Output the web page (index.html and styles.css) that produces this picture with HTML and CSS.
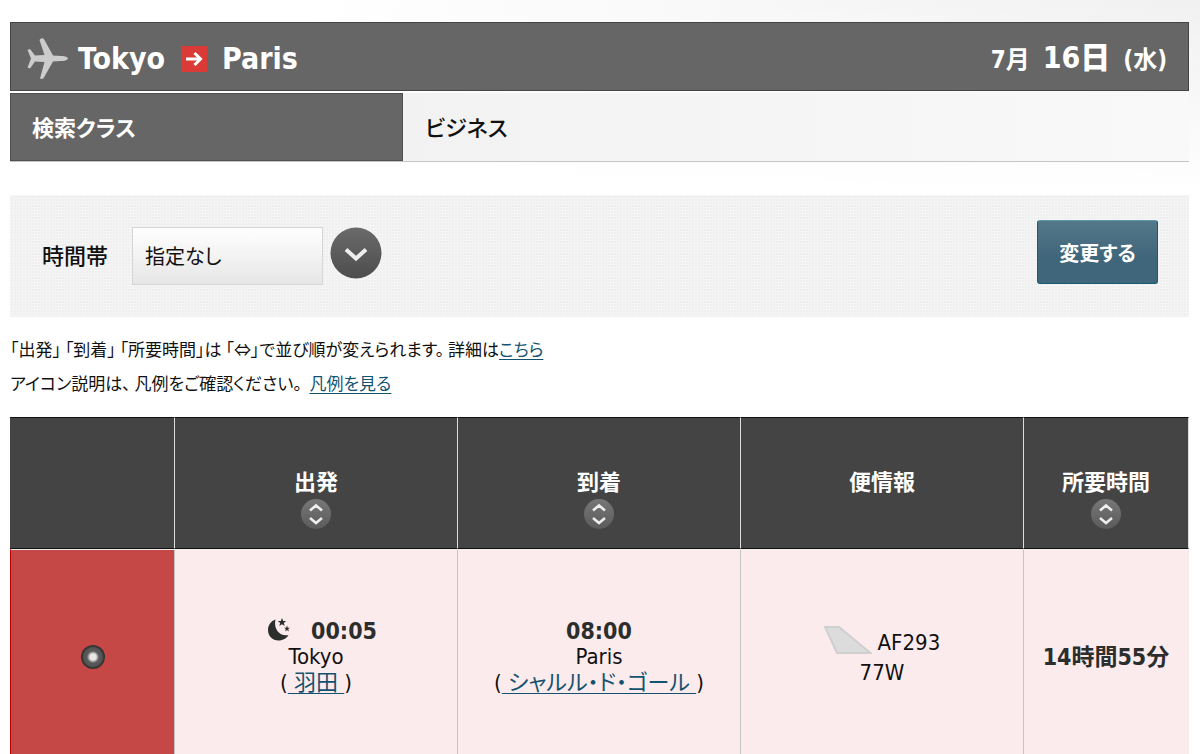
FILE: index.html
```html
<!DOCTYPE html>
<html lang="ja">
<head>
<meta charset="utf-8">
<title>Tokyo - Paris</title>
<link rel="stylesheet" href="styles.css">
</head>
<body>
<main class="page">
  <header class="route">
    <h1 class="route-title">
      <svg class="plane" viewBox="0 0 42 44" aria-hidden="true"><path d="M14 1.500C16 1 17 2 18 4L26 18.500C32 19 40 18.500 41 21.500C40 24.500 32 24 26 24.500L17.500 39.500C16.500 42 15 42.500 13 41.500L17.500 25L8 24.500L3 31.500L0.500 30.500L4 21.500L0.500 13L3 12L8 18.500L17.500 18L12.500 3Z"/></svg>
      <span>Tokyo</span>
      <svg class="arrow" viewBox="0 0 26 26" aria-hidden="true"><rect width="26" height="26"/><path d="M5 13H19M13.500 7L19.500 13L13.500 19"/></svg>
      <span>Paris</span>
    </h1>
    <p class="date"><span>7月</span> <strong>16日</strong> <span>(水)</span></p>
  </header>
  <dl class="class-row">
    <dt>検索クラス</dt>
    <dd>ビジネス</dd>
  </dl>
  <form class="filter">
    <label for="time-range">時間帯</label>
    <select id="time-range"><option>指定なし</option></select>
    <svg class="drop" viewBox="0 0 52 52" aria-hidden="true">
      <defs><linearGradient id="dg" x2="0" y2="1"><stop stop-color="#6a6a6a"/><stop offset="1" stop-color="#4d4d4d"/></linearGradient></defs>
      <circle cx="26" cy="26" r="25.500" fill="url(#dg)"/><path d="M16 22.500L26 31.500L36 22.500"/>
    </svg>
    <button type="button" class="change">変更する</button>
  </form>
  <div class="notes">
    <p>「出発」 「到着」 「所要時間」は 「⇔」で並び順が変えられます。 詳細は<a href="#">こちら</a></p>
    <p>アイコン説明は、 凡例をご確認ください。 &nbsp;<a href="#">凡例を見る</a></p>
  </div>
  <table class="flights">
    <colgroup><col class="narrow"><col class="wide"><col class="wide"><col class="wide"><col class="narrow"></colgroup>
    <thead>
      <tr>
        <th></th>
        <th>出発<button type="button" class="sort" aria-label="出発"><svg viewBox="0 0 30 30"><path d="M9 11.500L15 6.500L21 11.500M9 19L15 24L21 19"/></svg></button></th>
        <th>到着<button type="button" class="sort" aria-label="到着"><svg viewBox="0 0 30 30"><path d="M9 11.500L15 6.500L21 11.500M9 19L15 24L21 19"/></svg></button></th>
        <th>便情報</th>
        <th>所要時間<button type="button" class="sort" aria-label="所要時間"><svg viewBox="0 0 30 30"><path d="M9 11.500L15 6.500L21 11.500M9 19L15 24L21 19"/></svg></button></th>
      </tr>
    </thead>
    <tbody>
      <tr>
        <td class="pick"><input type="radio" name="flight" checked aria-label="AF293"></td>
        <td>
          <div class="time night"><svg class="moon" viewBox="0 0 24 24" aria-hidden="true"><path d="M8.500 2.500C4 4 1 8 1 13C1 19 5.500 23.500 11.500 23.500C16 23.500 20 21 21.500 18C14 20 6 13 8.500 2.500Z"/><path d="M15 1L16.200 4H19.200L16.800 5.900L17.700 9L15 7.200L12.300 9L13.200 5.900L10.800 4H13.800ZM20 8.500L20.800 10.700H23L21.200 12.100L21.900 14.400L20 13L18.100 14.400L18.800 12.100L17 10.700H19.200Z"/></svg>00:05</div>
          <div>Tokyo</div>
          <div>(<a href="#">&nbsp;羽田&nbsp;</a>)</div>
        </td>
        <td>
          <div class="time">08:00</div>
          <div>Paris</div>
          <div>(<a href="#">&nbsp;シャルル・ド・ゴール&nbsp;</a>)</div>
        </td>
        <td class="info">
          <div><svg class="tail" viewBox="0 0 48 28" aria-hidden="true"><path d="M1 1H15L46.500 27H13Z"/></svg>AF293</div>
          <div>77W</div>
        </td>
        <td class="duration">14時間55分</td>
      </tr>
    </tbody>
  </table>
</main>
</body>
</html>
```
FILE: styles.css
```css
* { box-sizing: border-box; }
body {
  margin: 0;
  height: 100vh;
  overflow: hidden;
  background: linear-gradient(#fff0, #fff) top / 100% 190px no-repeat, linear-gradient(100deg, #fff 25%, #f0f0f0 100%) top / 100% 190px no-repeat, #fff;
  color: #111;
  font-family: "DejaVu Sans Condensed", "Noto Sans CJK JP", sans-serif;
  font-feature-settings: "palt";
}
h1, p, dl, dd { margin: 0; }
a { color: #14536f; text-decoration: underline; text-underline-offset: 3px; text-decoration-thickness: 1px; }
.page { padding: 22px 11px 0 10px; }
.route {
  display: flex;
  align-items: center;
  justify-content: space-between;
  height: 69px;
  padding: 4px 21px 0 16px;
  border: 1px solid #444;
  background: #666;
  color: #fff;
}
.route-title { display: flex; align-items: center; font-size: 30px; line-height: 36px; }
.plane { width: 42px; height: 44px; margin-right: 9px; fill: #ccc; }
.arrow { width: 26px; height: 26px; margin: 0 15px 0 16px; }
.arrow rect { fill: #da3b36; }
.arrow path { fill: none; stroke: #fff; stroke-width: 3; }
.date { display: flex; align-items: baseline; gap: 13px; font-size: 24px; line-height: 36px; font-weight: 700; }
.date strong { font-size: 30px; }
.class-row {
  display: grid;
  grid-template-columns: 1fr 2fr;
  height: 71px;
  margin-bottom: 33px;
  padding-top: 2px;
  border-bottom: 1px solid #c4c4c4;
  font-size: 22px;
  font-weight: 500;
}
.class-row dt, .class-row dd { display: flex; align-items: center; padding: 0 22px 2px; }
.class-row dt { padding-left: 21px; background: #666; border: 1px solid #505050; color: #fff; font-weight: 700; }
.class-row dd { background: linear-gradient(90deg, #f2f2f2, #f9f9f9); }
.filter {
  display: flex;
  height: 122px;
  padding: 25px 31px 23px 32px;
  background-color: #efefef;
  background-image: linear-gradient(90deg, #f5f5f5 1px, transparent 1px), linear-gradient(#f5f5f5 1px, transparent 1px);
  background-size: 3px 3px;
}
.filter label { margin-right: 24px; font-size: 22px; font-weight: 500; line-height: 74px; }
.filter select {
  appearance: none;
  width: 191px;
  height: 58px;
  margin: 7px 7px 0 0;
  padding: 2px 12px 0;
  border: 1px solid #d5d5d5;
  border-radius: 0;
  background: linear-gradient(#fff, #e6e6e6);
  color: #111;
  font: inherit;
  font-size: 20px;
}
.drop { width: 52px; height: 52px; margin-top: 7px; }
.drop path { fill: none; stroke: #eee; stroke-width: 4; }
.change {
  width: 121px;
  height: 64px;
  margin-left: auto;
  padding: 0;
  border: 1px solid #175a7a;
  border-top-color: #6097ad;
  border-radius: 3px;
  background: linear-gradient(#537889, #40667b 60%);
  color: #fff;
  font: inherit;
  font-size: 20px;
  font-weight: 700;
}
.notes { padding: 15px 0 17px; font-family: "Noto Sans CJK JP", sans-serif; font-size: 17px; line-height: 34px; }
.flights { width: 100%; border-collapse: separate; border-spacing: 0; table-layout: fixed; }
.narrow { width: 14%; }
.wide { width: 24%; }
.flights th {
  height: 132px;
  padding: 49px 0 0;
  border-top: 1px solid #111;
  border-bottom: 1px solid #111;
  border-right: 1px solid #ddd;
  background: #444;
  color: #fff;
  font-size: 22px;
  line-height: 32px;
  vertical-align: top;
}
.sort { display: block; width: 30px; height: 30px; margin: 0 auto; padding: 0; border: 0; border-radius: 50%; background: linear-gradient(#777, #5b5b5b); }
.sort svg { display: block; width: 30px; height: 30px; fill: none; stroke: #eee; stroke-width: 2.500; }
.flights td {
  height: 214px;
  padding: 0;
  border-top: 1px solid #eee;
  border-right: 1px solid #c4c4c4;
  background: #fcebec;
  text-align: center;
  font-size: 22px;
  line-height: 26px;
}
.flights .duration { border-right-color: #fcebec; }
.flights .pick { background: #c54846; border-left: 1px solid #b00; }
.pick input {
  appearance: none;
  display: block;
  width: 24px;
  height: 24px;
  margin: 0 auto;
  border-radius: 50%;
  background: radial-gradient(circle, #e8e8e8 0 3px, #bbb 4px, #5b5b5b 6px, #555 9px, #333 11px);
}
.flights .time, .flights .duration { color: #2b2e2d; font-size: 23px; font-weight: 700; }
.night { padding-left: 12px; }
.moon { width: 24px; height: 24px; margin-right: 20px; fill: #2b2e2d; vertical-align: -2px; }
.info div { line-height: 30px; }
.tail { width: 48px; height: 28px; margin-right: 6px; vertical-align: -4px; }
.tail path { fill: #dcdcdc; stroke: #cfcfcf; stroke-width: 2; }
```
